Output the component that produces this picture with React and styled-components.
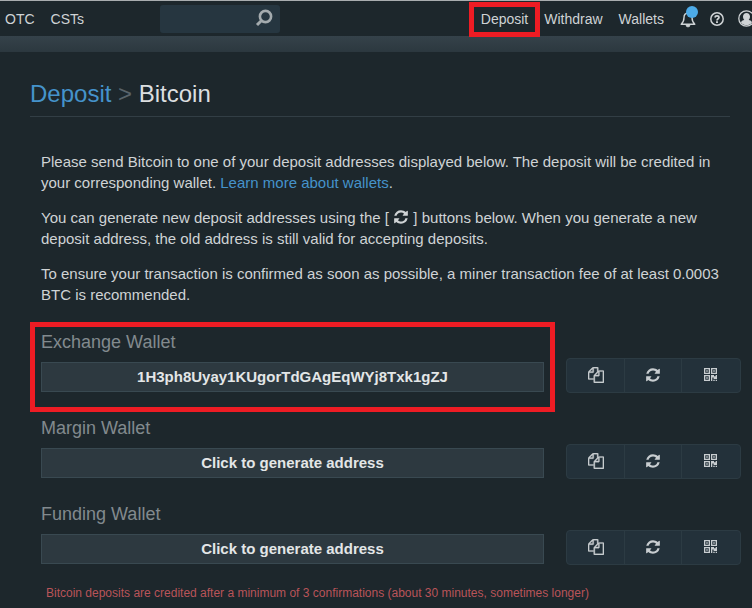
import React from "react"
import styled, { createGlobalStyle } from "styled-components"

const GlobalStyle = createGlobalStyle`
  * {
    box-sizing: border-box;
  }
  body {
    margin: 0;
    background: #1d272c;
    color: #cfd3d5;
    font-family: "Liberation Sans", Arial, sans-serif;
    overflow-x: hidden;
  }
`

const Header = styled.header`
  border-top: 1px solid #a9adaf;
`

const Navbar = styled.nav`
  display: flex;
  align-items: center;
  justify-content: space-between;
  height: 35px;
  padding-left: 5px;
  overflow-x: clip;
`

const NavGroup = styled.div`
  display: flex;
  flex-shrink: 0;
  align-items: center;
  gap: 16px;
`

const NavLink = styled.a`
  position: relative;
  color: #cfd3d5;
  font-size: 14px;
  line-height: 18px;
  text-decoration: none;
`

const Highlight = styled.span`
  position: absolute;
  inset: ${({ $inset }) => $inset};
  border: 5px solid #ee1c24;
  pointer-events: none;
`

const Search = styled.label`
  display: flex;
  align-items: center;
  width: 120px;
  height: 28px;
  margin-left: 60px;
  padding: 0 7px 2px;
  border-radius: 3px;
  background: #263640;
`

const SearchInput = styled.input`
  flex: 1;
  min-width: 0;
  border: 0;
  outline: 0;
  background: transparent;
  color: #cfd3d5;
  font: inherit;
`

const IconGroup = styled.div`
  display: flex;
  align-items: center;
  gap: 14px;
  margin-right: -3px;
`

const IconButton = styled.button`
  position: relative;
  display: flex;
  padding: 0;
  border: 0;
  background: none;
  color: #cfd3d5;
`

const Badge = styled.span`
  position: absolute;
  top: -4px;
  right: -2px;
  width: 12px;
  height: 12px;
  border-radius: 50%;
  background: #4dabe8;
`

const Band = styled.div`
  height: 16px;
  background: linear-gradient(#35424a, #2c383f);
`

const Main = styled.main`
  padding: 26px 11px 0 30px;
`

const Title = styled.h1`
  margin: 0 11px 34px 0;
  padding-bottom: 6px;
  border-bottom: 1px solid #323e45;
  color: #dcdfe0;
  font-size: 24px;
  font-weight: normal;
  line-height: 32px;
`

const TitleLink = styled.a`
  color: #4593cb;
  text-decoration: none;
`

const Separator = styled.span`
  color: #59636a;
`

const Content = styled.div`
  padding-left: 11px;
`

const Intro = styled.div`
  margin: 0 11px 22px 0;
`

const Text = styled.p`
  margin: 0 0 14px;
  font-size: 15px;
  line-height: 21px;
  svg {
    vertical-align: -2px;
  }
`

const TextLink = styled.a`
  color: #4593cb;
  text-decoration: none;
`

const Wallet = styled.section`
  display: flex;
  align-items: flex-end;
  gap: 22px;
  margin-bottom: 20px;
`

const WalletField = styled.div`
  position: relative;
  flex: 1;
  padding-bottom: 1px;
`

const WalletName = styled.h2`
  margin: 0 0 5px;
  color: #828a8e;
  font-size: 18px;
  font-weight: normal;
  line-height: 30px;
`

const Address = styled.button`
  display: block;
  width: 100%;
  height: 30px;
  padding: 0 0 2px;
  border: 1px solid #394951;
  background: #2d3940;
  color: #e3e6e7;
  font: bold 15px "Liberation Sans", Arial, sans-serif;
`

const Actions = styled.div`
  display: grid;
  grid-template-columns: repeat(3, 1fr);
  width: 175px;
  height: 35px;
  padding-right: 2px;
  border: 1px solid #2c3b43;
  border-radius: 4px;
  background: #23313a;
`

const Action = styled.button`
  display: flex;
  align-items: center;
  justify-content: center;
  padding: 0 0 2px;
  border: 0;
  background: none;
  color: #c8cdd0;
  & + & {
    border-left: 1px solid #2c3b43;
  }
`

const Note = styled.p`
  margin: 0;
  padding: 0 5px;
  color: #b95459;
  font-size: 12px;
  line-height: 16px;
`

const SearchIcon = () => (
  <svg width="18" height="18" viewBox="0 0 18 18" fill="none" stroke="#a4abae" aria-hidden="true">
    <circle cx="10.5" cy="7.5" r="5.6" strokeWidth="2.6" />
    <path d="M6.3 11.7L2 16" strokeWidth="3" />
  </svg>
)

const BellIcon = () => (
  <svg width="16" height="18" viewBox="0 0 16 18" fill="none" stroke="currentColor" aria-hidden="true">
    <path d="M8 3C5.4 3 4 5 4 7.5C4 11 3 12.6 1.2 14.2H14.8C13 12.6 12 11 12 7.5C12 5 10.6 3 8 3Z" strokeWidth="1.4" strokeLinejoin="round" />
    <path d="M8 1.2V3" strokeWidth="1.5" />
    <path d="M6 15H10A2 2 0 0 1 6 15Z" fill="currentColor" strokeWidth="0.6" />
  </svg>
)

const HelpIcon = () => (
  <svg width="14" height="14" viewBox="0 0 14 14" fill="none" stroke="currentColor" aria-hidden="true">
    <circle cx="7" cy="7" r="6.2" strokeWidth="1.5" />
    <path d="M4.9 5.5C5.1 4.3 5.9 3.8 7 3.8C8.2 3.8 9 4.5 9 5.4C9 6.7 7 6.8 7 8.4" strokeWidth="1.7" />
    <path d="M7 9.3V11" strokeWidth="1.9" />
  </svg>
)

const UserIcon = () => (
  <svg width="17" height="17" viewBox="0 0 17 17" aria-hidden="true">
    <circle cx="8.5" cy="8.5" r="7.7" fill="none" stroke="currentColor" strokeWidth="1.3" />
    <path
      d="M8.5 3C6.4 3 5 4.5 5 6.6C5 8 5.5 9.2 6.3 10C4.5 10.2 3.4 11.1 3 12.6C4.3 14.4 6.2 15.3 8.5 15.3C10.8 15.3 12.7 14.4 14 12.6C13.6 11.1 12.5 10.2 10.7 10C11.5 9.2 12 8 12 6.6C12 4.5 10.6 3 8.5 3Z"
      fill="currentColor"
    />
  </svg>
)

const CopyIcon = () => (
  <svg width="16" height="16" viewBox="0 0 1792 1792" fill="currentColor" stroke="currentColor" strokeWidth="40" aria-hidden="true">
    <path d="M1696 384q40 0 68 28t28 68v1216q0 40-28 68t-68 28h-960q-40 0-68-28t-28-68v-288h-544q-40 0-68-28t-28-68v-672q0-40 20-88t48-76l408-408q28-28 76-48t88-20h416q40 0 68 28t28 68v328q68-40 128-40h416zm-544 213l-299 299h299v-299zm-640-384l-299 299h299v-299zm196 647l316-316v-416h-384v416q0 40-28 68t-68 28h-416v640h512v-256q0-40 20-88t48-76zm956 804v-1152h-384v416q0 40-28 68t-68 28h-416v640h896z" />
  </svg>
)

const RefreshIcon = () => (
  <svg width="16" height="16" viewBox="0 0 1792 1792" fill="currentColor" aria-hidden="true">
    <path d="M1639 1056q0 5-1 7-64 268-268 434.5t-478 166.5q-146 0-282.5-55t-243.5-157l-129 129q-19 19-45 19t-45-19-19-45v-448q0-26 19-45t45-19h448q26 0 45 19t19 45-19 45l-137 137q71 66 161 102t187 36q134 0 250-65t186-179q11-17 53-117 8-23 30-23h192q13 0 22.5 9.5t9.5 22.5zm25-800v448q0 26-19 45t-45 19h-448q-26 0-45-19t-19-45 19-45l138-138q-148-137-349-137-134 0-250 65t-186 179q-11 17-53 117-8 23-30 23h-199q-13 0-22.5-9.5t-9.5-22.5v-7q65-268 270-434.5t480-166.5q146 0 284 55.5t245 156.5l130-129q19-19 45-19t45 19 19 45z" />
  </svg>
)

const QrIcon = () => (
  <svg width="13" height="13" viewBox="0 0 13 13" fill="currentColor" aria-hidden="true">
    <path
      fillRule="evenodd"
      d="M0 0H6V6H0ZM1.3 1.3V4.7H4.7V1.3ZM7 0H13V6H7ZM8.3 1.3V4.7H11.7V1.3ZM0 7H6V13H0ZM1.3 8.3V11.7H4.7V8.3Z"
    />
    <path d="M2.3 2.3H3.7V3.7H2.3ZM9.3 2.3H10.7V3.7H9.3ZM2.3 9.3H3.7V10.7H2.3ZM7 7H10V8.3H11.7V7H13V11H9.6V9.6H8.3V13H7ZM9.3 11.7H10.7V13H9.3ZM11.7 11.7H13V13H11.7Z" />
  </svg>
)

const wallets = [
  { name: "Exchange Wallet", address: "1H3ph8Uyay1KUgorTdGAgEqWYj8Txk1gZJ" },
  { name: "Margin Wallet" },
  { name: "Funding Wallet" },
]

function WalletRow({ name, address }) {
  return (
    <Wallet>
      <WalletField>
        <WalletName>{name}</WalletName>
        <Address type="button">{address || "Click to generate address"}</Address>
        {address && <Highlight $inset="-5px -11px -19px" />}
      </WalletField>
      <Actions>
        <Action type="button" aria-label="Copy address">
          <CopyIcon />
        </Action>
        <Action type="button" aria-label="New address">
          <RefreshIcon />
        </Action>
        <Action type="button" aria-label="QR code">
          <QrIcon />
        </Action>
      </Actions>
    </Wallet>
  )
}

function App() {
  return (
    <>
      <GlobalStyle />
      <Header>
        <Navbar>
          <NavGroup>
            <NavLink href="#otc">OTC</NavLink>
            <NavLink href="#csts">CSTs</NavLink>
            <Search>
              <SearchInput type="text" aria-label="Search" />
              <SearchIcon />
            </Search>
          </NavGroup>
          <NavGroup>
            <NavLink href="#deposit">
              Deposit
              <Highlight $inset="-8px -12px -9px" />
            </NavLink>
            <NavLink href="#withdraw">Withdraw</NavLink>
            <NavLink href="#wallets">Wallets</NavLink>
            <IconGroup>
              <IconButton type="button" aria-label="Notifications">
                <BellIcon />
                <Badge />
              </IconButton>
              <IconButton type="button" aria-label="Help">
                <HelpIcon />
              </IconButton>
              <IconButton type="button" aria-label="Account">
                <UserIcon />
              </IconButton>
            </IconGroup>
          </NavGroup>
        </Navbar>
        <Band />
      </Header>
      <Main>
        <Title>
          <TitleLink href="#deposit">Deposit</TitleLink> <Separator>&gt;</Separator> Bitcoin
        </Title>
        <Content>
          <Intro>
            <Text>
              Please send Bitcoin to one of your deposit addresses displayed below. The deposit will be credited in
              your corresponding wallet. <TextLink href="#learn">Learn more about wallets</TextLink>.
            </Text>
            <Text>
              You can generate new deposit addresses using the [ <RefreshIcon /> ] buttons below. When you generate a
              new deposit address, the old address is still valid for accepting deposits.
            </Text>
            <Text>
              To ensure your transaction is confirmed as soon as possible, a miner transaction fee of at least 0.0003
              BTC is recommended.
            </Text>
          </Intro>
          {wallets.map((wallet) => (
            <WalletRow key={wallet.name} {...wallet} />
          ))}
          <Note>Bitcoin deposits are credited after a minimum of 3 confirmations (about 30 minutes, sometimes longer)</Note>
        </Content>
      </Main>
    </>
  )
}

export default App
